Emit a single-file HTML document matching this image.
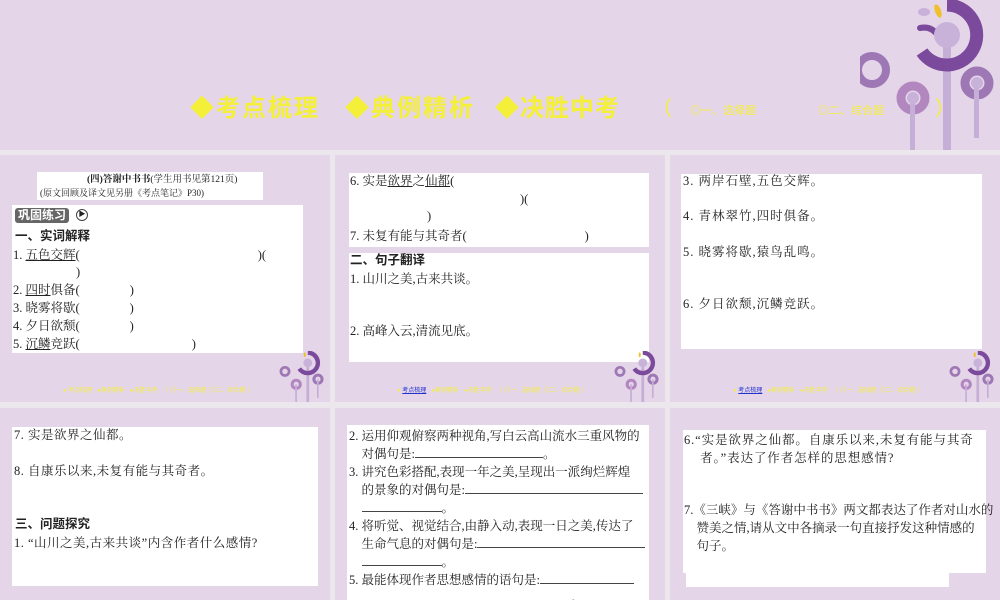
<!DOCTYPE html>
<html><head><meta charset="utf-8"><style>
*{margin:0;padding:0;box-sizing:border-box}
body{width:1000px;height:600px;overflow:hidden;background:#ebe7ec;position:relative;font-family:"Liberation Serif","Noto Serif CJK SC",serif;color:#222}
.s{position:absolute;background:#e5d5e8;overflow:hidden}
.w{position:absolute;background:#fff}
.t{position:absolute;font-size:12.5px;white-space:nowrap;line-height:15px}
.b{font-family:"Liberation Sans","Noto Sans CJK SC",sans-serif;font-weight:bold}
u{text-decoration:underline}
.nav{position:absolute;font-family:"Liberation Sans","Noto Sans CJK SC",sans-serif;font-size:6px;color:#f2ee4a;white-space:nowrap}
.nav a{color:#2233cc;text-decoration:underline}
.deco{position:absolute}
.h{position:absolute;top:94px;font-family:"Liberation Sans","Noto Sans CJK SC",sans-serif;font-weight:bold;font-size:24px;color:#f4f03a;white-space:nowrap;line-height:30px}
.hs{position:absolute;top:102px;font-family:"Noto Sans CJK SC",sans-serif;font-size:11px;color:#f4f03a;white-space:nowrap}
</style></head><body>
<div class="s" style="left:0;top:0;width:1000px;height:150px">
<div class="h" style="left:190px;letter-spacing:2px">◆考点梳理</div>
<div class="h" style="left:345px;letter-spacing:2px">◆典例精析</div>
<div class="h" style="left:495px;letter-spacing:1px">◆决胜中考</div>
<div class="h" style="left:652px;font-weight:normal;font-size:20px">（</div>
<div class="hs" style="left:690px">◎一、选择题</div>
<div class="hs" style="left:818px">◎二、综合题</div>
<div class="h" style="left:935px;font-weight:normal;font-size:20px">）</div>
<svg class="deco" style="left:860px;top:0" width="140" height="150" viewBox="0 0 140 150">
<circle cx="12" cy="70" r="14" fill="none" stroke="#9e78b4" stroke-width="8"/>
<rect x="83" y="35" width="8" height="115" fill="#c6afd6"/>
<path d="M87 5 A30 30 0 1 1 62 52" fill="none" stroke="#7b4a9c" stroke-width="13"/>
<path d="M60 28 Q70 26 76 33" fill="none" stroke="#7b4a9c" stroke-width="6" stroke-linecap="round"/>
<circle cx="87" cy="35" r="13" fill="#c9b2d9"/>
<ellipse cx="78" cy="11" rx="3" ry="7" fill="#f0bf2a" transform="rotate(-20 78 11)"/>
<ellipse cx="64" cy="12" rx="6" ry="4" fill="#c9b2d9"/>
<circle cx="53" cy="98" r="12" fill="none" stroke="#b287c0" stroke-width="9"/>
<rect x="50" y="98" width="5" height="52" fill="#c6afd6"/><circle cx="53" cy="98" r="6" fill="#c9b2d9"/>
<circle cx="117" cy="83" r="12" fill="none" stroke="#9e78b4" stroke-width="9"/>
<rect x="114" y="83" width="5" height="55" fill="#c6afd6"/><circle cx="117" cy="83" r="6" fill="#c9b2d9"/>
</svg>
</div>

<!-- row 1 -->
<div class="s" style="left:0;top:155px;width:330px;height:247px">
<div class="w" style="left:37px;top:17px;width:226px;height:28px"></div>
<div class="t" style="left:87px;top:18px;font-size:9.5px" ><b>(四)答谢中书书</b>(学生用书见第121页)</div>
<div class="t" style="left:40px;top:31px;font-size:9px">(原文回顾及译文见另册《考点笔记》P30)</div>
<div class="w" style="left:12px;top:50px;width:291px;height:148px"></div>
<div class="t b" style="left:15px;top:53px;background:#666;color:#fff;border-radius:3px;padding:0 3px;font-size:12px">巩固练习</div>
<div class="t" style="left:76px;top:54px;width:12px;height:12px;border:1.5px solid #444;border-radius:50%;font-size:7px;line-height:9px;text-align:center">▶</div>
<div class="t b" style="left:15px;top:74px">一、实词解释</div>
<div class="t" style="left:13px;top:93px">1. <u>五色</u><u>交辉</u>(<span style="display:inline-block;width:178px"></span>)(</div>
<div class="t" style="left:76px;top:110px">)</div>
<div class="t" style="left:13px;top:128px">2. <u>四时</u>俱备(<span style="display:inline-block;width:50px"></span>)</div>
<div class="t" style="left:13px;top:146px">3. 晓雾将歇(<span style="display:inline-block;width:50px"></span>)</div>
<div class="t" style="left:13px;top:164px">4. 夕日欲颓(<span style="display:inline-block;width:50px"></span>)</div>
<div class="t" style="left:13px;top:182px">5. <u>沉鳞</u>竞跃(<span style="display:inline-block;width:112px"></span>)</div>
<div class="nav" style="left:63px;top:230px">● 考点梳理&nbsp;&nbsp;&nbsp;●典例精析&nbsp;&nbsp;&nbsp;●决胜中考&nbsp;&nbsp;&nbsp;（ ◎一、选择题 &nbsp;◎二、综合题 ）</div>
<svg class="deco" style="left:276px;top:196px" width="52" height="51" viewBox="0 0 140 150">
<rect x="83" y="35" width="8" height="115" fill="#c6afd6"/><path d="M87 5 A30 30 0 1 1 62 52" fill="none" stroke="#7b4a9c" stroke-width="13"/><circle cx="87" cy="35" r="13" fill="#c9b2d9"/><ellipse cx="78" cy="11" rx="3" ry="7" fill="#f0bf2a"/><circle cx="53" cy="98" r="12" fill="none" stroke="#b287c0" stroke-width="9"/><rect x="50" y="98" width="5" height="52" fill="#c6afd6"/><circle cx="117" cy="83" r="12" fill="none" stroke="#9e78b4" stroke-width="9"/><rect x="114" y="83" width="5" height="55" fill="#c6afd6"/><circle cx="20" cy="60" r="12" fill="none" stroke="#9e78b4" stroke-width="8"/></svg>
</div>

<div class="s" style="left:335px;top:155px;width:330px;height:247px">
<div class="w" style="left:14px;top:18px;width:300px;height:74px"></div>
<div class="t" style="left:15px;top:19px">6. 实是<u>欲界</u>之<u>仙都</u>(</div>
<div class="t" style="left:185px;top:37px">)(</div>
<div class="t" style="left:92px;top:54px">)</div>
<div class="t" style="left:15px;top:74px">7. 未复有能与其奇者(<span style="display:inline-block;width:118px"></span>)</div>
<div class="w" style="left:14px;top:98px;width:300px;height:109px"></div>
<div class="t b" style="left:15px;top:98px">二、句子翻译</div>
<div class="t" style="left:15px;top:117px">1. 山川之美,古来共谈。</div>
<div class="t" style="left:15px;top:169px">2. 高峰入云,清流见底。</div>
<div class="nav" style="left:62px;top:230px">● <a>考点梳理</a>&nbsp;&nbsp;&nbsp;●典例精析&nbsp;&nbsp;&nbsp;●决胜中考&nbsp;&nbsp;&nbsp;（ ◎一、选择题 &nbsp;◎二、综合题 ）</div>
<svg class="deco" style="left:276px;top:196px" width="52" height="51" viewBox="0 0 140 150"><rect x="83" y="35" width="8" height="115" fill="#c6afd6"/><path d="M87 5 A30 30 0 1 1 62 52" fill="none" stroke="#7b4a9c" stroke-width="13"/><circle cx="87" cy="35" r="13" fill="#c9b2d9"/><ellipse cx="78" cy="11" rx="3" ry="7" fill="#f0bf2a"/><circle cx="53" cy="98" r="12" fill="none" stroke="#b287c0" stroke-width="9"/><rect x="50" y="98" width="5" height="52" fill="#c6afd6"/><circle cx="117" cy="83" r="12" fill="none" stroke="#9e78b4" stroke-width="9"/><rect x="114" y="83" width="5" height="55" fill="#c6afd6"/><circle cx="20" cy="60" r="12" fill="none" stroke="#9e78b4" stroke-width="8"/></svg>
</div>

<div class="s" style="left:670px;top:155px;width:330px;height:247px">
<div class="w" style="left:11px;top:19px;width:301px;height:175px"></div>
<div class="t" style="left:13px;top:19px;letter-spacing:1px">3. 两岸石壁,五色交辉。</div>
<div class="t" style="left:13px;top:54px;letter-spacing:1px">4. 青林翠竹,四时俱备。</div>
<div class="t" style="left:13px;top:90px;letter-spacing:1px">5. 晓雾将歇,猿鸟乱鸣。</div>
<div class="t" style="left:13px;top:142px;letter-spacing:1px">6. 夕日欲颓,沉鳞竞跃。</div>
<div class="nav" style="left:63px;top:230px">● <a>考点梳理</a>&nbsp;&nbsp;&nbsp;●典例精析&nbsp;&nbsp;&nbsp;●决胜中考&nbsp;&nbsp;&nbsp;（ ◎一、选择题 &nbsp;◎二、综合题 ）</div>
<svg class="deco" style="left:276px;top:196px" width="52" height="51" viewBox="0 0 140 150"><rect x="83" y="35" width="8" height="115" fill="#c6afd6"/><path d="M87 5 A30 30 0 1 1 62 52" fill="none" stroke="#7b4a9c" stroke-width="13"/><circle cx="87" cy="35" r="13" fill="#c9b2d9"/><ellipse cx="78" cy="11" rx="3" ry="7" fill="#f0bf2a"/><circle cx="53" cy="98" r="12" fill="none" stroke="#b287c0" stroke-width="9"/><rect x="50" y="98" width="5" height="52" fill="#c6afd6"/><circle cx="117" cy="83" r="12" fill="none" stroke="#9e78b4" stroke-width="9"/><rect x="114" y="83" width="5" height="55" fill="#c6afd6"/><circle cx="20" cy="60" r="12" fill="none" stroke="#9e78b4" stroke-width="8"/></svg>
</div>

<!-- row 2 -->
<div class="s" style="left:0;top:408px;width:330px;height:192px">
<div class="w" style="left:12px;top:19px;width:306px;height:159px"></div>
<div class="t" style="left:14px;top:20px;letter-spacing:0.5px">7. 实是欲界之仙都。</div>
<div class="t" style="left:14px;top:56px;letter-spacing:0.5px">8. 自康乐以来,未复有能与其奇者。</div>
<div class="t b" style="left:15px;top:109px">三、问题探究</div>
<div class="t" style="left:14px;top:128px;letter-spacing:0.5px">1. “山川之美,古来共谈”内含作者什么感情?</div>
</div>

<div class="s" style="left:335px;top:408px;width:330px;height:192px">
<div class="w" style="left:12px;top:17px;width:302px;height:180px"></div>
<div class="t" style="left:14px;top:19px;line-height:18px;white-space:nowrap;width:302px">2. 运用仰观俯察两种视角,写白云高山流水三重风物的<br>&nbsp;&nbsp;&nbsp;&nbsp;对偶句是:<span style="display:inline-block;width:128px;border-bottom:1px solid #444;height:13px"></span>。<br>3. 讲究色彩搭配,表现一年之美,呈现出一派绚烂辉煌<br>&nbsp;&nbsp;&nbsp;&nbsp;的景象的对偶句是:<span style="display:inline-block;width:178px;border-bottom:1px solid #444;height:13px"></span><br>&nbsp;&nbsp;&nbsp;&nbsp;<span style="display:inline-block;width:80px;border-bottom:1px solid #444;height:13px"></span>。<br>4. 将听觉、视觉结合,由静入动,表现一日之美,传达了<br>&nbsp;&nbsp;&nbsp;&nbsp;生命气息的对偶句是:<span style="display:inline-block;width:168px;border-bottom:1px solid #444;height:13px"></span><br>&nbsp;&nbsp;&nbsp;&nbsp;<span style="display:inline-block;width:80px;border-bottom:1px solid #444;height:13px"></span>。<br>5. 最能体现作者思想感情的语句是:<span style="display:inline-block;width:94px;border-bottom:1px solid #444;height:13px"></span><br><span style="padding-left:222px">。</span></div>
</div>

<div class="s" style="left:670px;top:408px;width:330px;height:192px">
<div class="w" style="left:13px;top:22px;width:303px;height:143px"></div>
<div class="w" style="left:16px;top:163px;width:263px;height:16px"></div>
<div class="t" style="left:14px;top:23px;line-height:18px;letter-spacing:0.9px">6.“实是欲界之仙都。自康乐以来,未复有能与其奇<br>&nbsp;&nbsp;&nbsp;&nbsp;者。”表达了作者怎样的思想感情?</div>
<div class="t" style="left:14px;top:93px;line-height:18px;letter-spacing:0px">7.《三峡》与《答谢中书书》两文都表达了作者对山水的<br>&nbsp;&nbsp;&nbsp;&nbsp;赞美之情,请从文中各摘录一句直接抒发这种情感的<br>&nbsp;&nbsp;&nbsp;&nbsp;句子。</div>
</div>
</body></html>
